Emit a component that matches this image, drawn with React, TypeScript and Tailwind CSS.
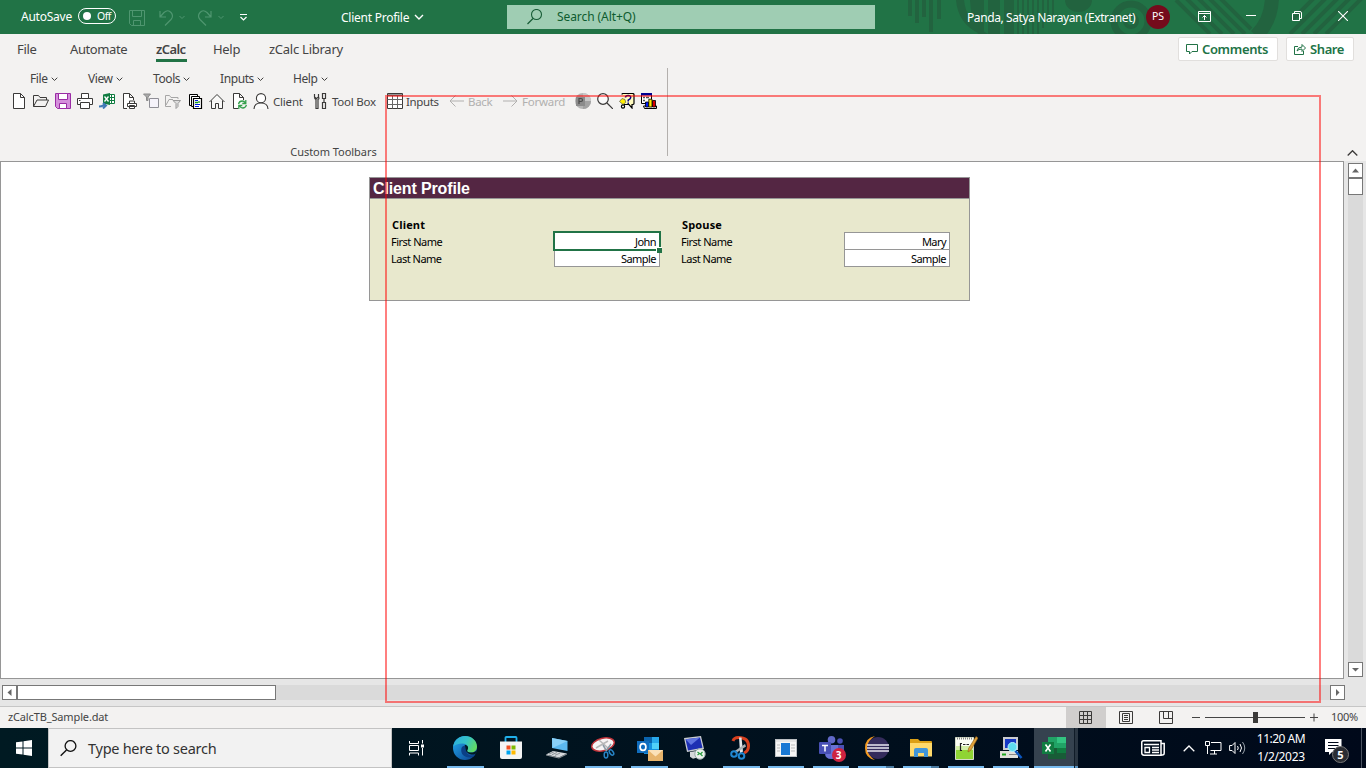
import React from "react";

const K = "#3b3a39";

function Svg({ w = 16, h = 16, className = "", children }: { w?: number; h?: number; className?: string; children: React.ReactNode }) {
  return (
    <svg width={w} height={h} viewBox={`0 0 ${w} ${h}`} className={`block shrink-0 ${className}`} fill="none">
      {children}
    </svg>
  );
}

function Chevron({ w = 7, color = K }: { w?: number; color?: string }) {
  return (
    <svg width={w} height={w * 0.6} viewBox="0 0 10 6" className="block shrink-0" fill="none">
      <path d="M1 1l4 4 4-4" stroke={color} strokeWidth="1.4" />
    </svg>
  );
}

function TitlePattern() {
  const thin = [1017, 1022, 1027, 1032, 1037, 1042, 1047, 1052];
  return (
    <svg width="466" height="34" viewBox="900 0 466 34" className="absolute right-0 top-0" fill="none">
      <g fill="#22633f">
        <path d="M908 0h4v16h-4zM915 0h4v23h-4zM922 0h4v17h-4zM929 0h4v32h-4zM937 0h4v19h-4z" />
        <path d="M956 0h8q2 22 24 34h-8Q958 24 956 0zM970 0h14v34h-6Q971 20 970 0zM988 0h12v34h-12zM1004 0h10v34h-10z" />
        {thin.map((x, i) => (
          <rect key={x} x={x} y="0" width="2" height={34 - (i > 4 ? (i - 4) * 6 : 0)} />
        ))}
        <path d="M1065 0h27a13.5 12 0 0 1-27 0z" />
      </g>
      <g stroke="#22633f">
        <circle cx="1131" cy="21" r="17" strokeWidth="7" />
        <circle cx="1131" cy="21" r="6" strokeWidth="4" />
        <path d="M1176 0l34 34M1186 -2l36 36M1197 -3l37 37M1208 -3l37 37M1219 -3l32 32" strokeWidth="4" />
        <path d="M1272 -4q0 24-16 40" strokeWidth="14" />
        <path d="M1292 20l22-22M1290 34l36-36M1302 34l36-36M1314 34l36-36M1326 34l36-36" strokeWidth="4" />
      </g>
    </svg>
  );
}

function TitleBar() {
  return (
    <header className="relative flex h-[34px] shrink-0 items-center bg-[#217346] text-white">
      <TitlePattern />
      <div className="relative flex h-full w-full items-center text-[12px]">
        <span className="ml-[21px] w-[57px] whitespace-nowrap tracking-[-0.23px]">AutoSave</span>
        <span className="flex h-[16px] w-[38px] items-center rounded-full border border-white pl-[4px] -mt-[2px]">
          <span className="h-[8px] w-[8px] rounded-full bg-white" />
          <span className="ml-[6px] text-[10.5px] leading-none tracking-[-0.5px]">Off</span>
        </span>
        <Svg w={16} h={16} className="ml-[13px] mt-[2px]">
          <path d="M.5.5h15v15h-13l-2-2zM3.5.5v6h9v-6M4.500 15.500v-5h7v5" stroke="#4f9670" />
        </Svg>
        <Svg w={28} h={18} className="ml-[13px] mt-[1px]">
          <path d="M2 2v6h6M2 8l4-4.500q4-3.500 7 0t0 7l-6 6" stroke="#4f9670" strokeWidth="1.2" />
          <path d="M21.500 7l2.500 2.500 2.500-2.500" stroke="#4f9670" />
        </Svg>
        <Svg w={28} h={18} className="ml-[11px] mt-[1px]">
          <path d="M14 2v6H8M14 8l-4-4.500q-4-3.500-7 0t0 7l6 6" stroke="#4f9670" strokeWidth="1.2" />
          <path d="M21.500 7l2.500 2.500 2.500-2.500" stroke="#4f9670" />
        </Svg>
        <Svg w={9} h={7} className="ml-[14px]">
          <path d="M1 .5h7M1.500 3l3 3 3-3" stroke="#fff" strokeWidth="1.2" />
        </Svg>
        <span className="ml-[93px] w-[73px] whitespace-nowrap pt-[1px] tracking-[-0.25px]">Client Profile</span>
        <Chevron w={10} color="#fff" />
        <div className="-mt-[1px] ml-[83px] flex h-[24px] w-[368px] items-center bg-[#9fcdb3] text-[#0e5c2f]">
          <Svg w={16} h={16} className="ml-[20px]">
            <circle cx="9.500" cy="5.500" r="5" stroke="#185c37" strokeWidth="1.100" />
            <path d="M6 9.500L.5 15" stroke="#185c37" strokeWidth="1.200" />
          </Svg>
          <span className="ml-[14px] whitespace-nowrap tracking-[-0.08px]">Search (Alt+Q)</span>
        </div>
        <span className="ml-[92px] w-[170px] whitespace-nowrap pt-[1px] tracking-[-0.4px]">Panda, Satya Narayan (Extranet)</span>
        <span className="ml-[9px] flex h-[24px] w-[24px] items-center justify-center rounded-full bg-[#750b1c] text-[10.5px]">PS</span>
        <Svg w={13} h={11} className="-mt-[2px] ml-[28px]">
          <path d="M.5.5h12v10H.5zM.5 2.500h12M6.500 9V4.500M4.500 6.500l2-2 2 2" stroke="#fff" />
        </Svg>
        <span className="-mt-[3px] ml-[35px] h-px w-[10px] bg-white" />
        <Svg w={10} h={10} className="-mt-[2px] ml-[36px]">
          <path d="M.5 2.500h7v7h-7zM2.500 2V.5H8Q9.500.5 9.500 2v5.500H8" stroke="#fff" />
        </Svg>
        <Svg w={10} h={10} className="-mt-[2px] ml-[36px]">
          <path d="M0 0l10 10M10 0L0 10" stroke="#fff" strokeWidth="1.100" />
        </Svg>
      </div>
    </header>
  );
}

function TabRow() {
  return (
    <nav className="flex h-[30px] items-center text-[13px] text-[#444]">
      <span className="ml-[17px] w-[53px] whitespace-nowrap pt-[2px] tracking-[-0.35px]">File</span>
      <span className="w-[86px] whitespace-nowrap pt-[2px] tracking-[-0.4px]">Automate</span>
      <span className="flex h-full w-[31px] flex-col justify-end">
        <span className="whitespace-nowrap text-[13px] font-semibold leading-[18px] tracking-[-0.6px]">zCalc</span>
        <span className="mb-[2px] mt-[1px] h-[3px] bg-[#217346]" />
      </span>
      <span className="ml-[26px] w-[56px] whitespace-nowrap pt-[2px] tracking-[-0.3px]">Help</span>
      <span className="whitespace-nowrap pt-[2px] tracking-[-0.25px]">zCalc Library</span>
      <div className="ml-auto mr-[12px] flex gap-[8px] text-[13px] font-semibold text-[#217346]">
        <span className="flex h-[24px] w-[100px] items-center rounded-[2px] border border-[#e1dfdd] bg-white pl-[7px]">
          <Svg w={12} h={11}>
            <path d="M.5.5h11v7H6L3.500 10V7.500h-3z" stroke="#217346" />
          </Svg>
          <span className="ml-[4px] whitespace-nowrap pt-[1px] tracking-[-0.35px]">Comments</span>
        </span>
        <span className="flex h-[24px] w-[68px] items-center rounded-[2px] border border-[#e1dfdd] bg-white pl-[7px]">
          <Svg w={12} h={12}>
            <path d="M4 3.500H.5v8h9V8M3 8q.5-4 5-4V1.500L11.500 5 8 8.500V6Q4.500 6 3 8z" stroke="#217346" />
          </Svg>
          <span className="ml-[4px] whitespace-nowrap pt-[1px] tracking-[-0.4px]">Share</span>
        </span>
      </div>
    </nav>
  );
}

function MenuItem({ label, className }: { label: string; className: string }) {
  return (
    <span className={`flex items-center gap-[3px] whitespace-nowrap ${className}`}>
      {label}
      <Chevron />
    </span>
  );
}

function Toolbar() {
  return (
    <div className="flex h-[18px] items-center gap-[6px] pl-[11px]">
      <Svg>
        <path d="M2.500.5h7l4 4v11h-11z" fill="#fff" stroke={K} />
        <path d="M9.500.5v4h4" stroke={K} />
      </Svg>
      <Svg>
        <path d="M.5 13.500v-11h5l1.500 2h6.500V7M.5 13.500l3.500-6.500h11.500l-3 6.500z" stroke={K} />
      </Svg>
      <Svg>
        <path d="M.5.5h15v15h-13l-2-2z" fill="#d48fdb" stroke="#9a2ca5" />
        <path d="M3.500.5h9v6h-9zM4.500 10.500h7v5h-7z" fill="#fff" stroke="#9a2ca5" />
      </Svg>
      <Svg>
        <path d="M.5 5.500h15v6H.5z" fill="#fff" stroke={K} />
        <path d="M4.500.5h7v5h-7zM3.500 9.500h9v6h-9z" fill="#fff" stroke={K} />
        <path d="M2 7.500h1.500" stroke={K} />
      </Svg>
      <Svg>
        <path d="M10 1.500h5.500v9H10zM11 4.500h4M11 7.500h4M12.500 1.500v9" stroke="#107c41" fill="#fff" />
        <path d="M4 1.500L11 0v12l-7-1.500z" fill="#107c41" />
        <path d="M5.500 3.500l4 5M9.500 3.500l-4 5" stroke="#fff" strokeWidth="1.300" />
        <path d="M0 13.500q3 0 4-1h2M4 10l3 2.500L4 15.500" stroke="#3f78b5" strokeWidth="2" />
      </Svg>
      <Svg>
        <path d="M6 15.500H2.500V.5h6l4 4V7M8.500.5v4h4" fill="#fff" stroke={K} />
        <path d="M6.500 10.500h9v3h-9zM8.500 8h5v2.500h-5zM8.500 12.500h5v3h-5z" fill="#fff" stroke={K} />
      </Svg>
      <Svg>
        <path d="M.5 1h7L5 4v3.500H3.500V4z" fill="#aaa" stroke="#8a8a8a" />
        <path d="M6.500 5.500h9v9h-9z" fill="#f5f3fa" stroke="#8f8f96" />
      </Svg>
      <Svg>
        <path d="M6 13.500H.5v-11h4l1.500 2h7V6M1 12l3-5.500h4" stroke="#a6a6a6" />
        <path d="M8 7.500h7.500l-2.500 3v3l-2 2v-5z" fill="#ddd" stroke="#999" />
      </Svg>
      <Svg>
        <path d="M2.500 1.500h8v11h-8z" fill="#fff" stroke="#000" />
        <path d="M4.500 3.500h8v10h-8z" fill="#fff" stroke="#000" />
        <path d="M6.500 5.500h8v10h-8z" fill="#fff" stroke="#000" strokeWidth="1.200" />
        <path d="M8 7.500h3M8 11.500h5M8 13.500h4" stroke="#001be0" strokeWidth="1.200" />
        <path d="M8 9.500h3M12 8v2" stroke="#13971e" strokeWidth="1.300" />
      </Svg>
      <Svg>
        <path d="M.5 9L8 1.500 15.500 9M2.500 7.500v8h4v-5h3v5h4v-8" stroke={K} fill="#fff" fillOpacity=".5" />
      </Svg>
      <Svg>
        <path d="M7 15.500H2.500V.5h6l4 4V7M8.500.5v4h4" fill="#fff" stroke={K} />
        <path d="M7.500 11q.8-3 3.700-3 2 0 3.300 2M14.800 7v3.500h-3.500M15.500 12q-1 3-3.700 3-2 0-3.300-2M7.800 16v-3.500h3.500" stroke="#34a04c" strokeWidth="1.300" />
      </Svg>
      <Svg>
        <circle cx="8" cy="5.200" r="4.600" fill="#fff" stroke={K} strokeWidth="1.100" />
        <path d="M1 16q.3-6 7-6t7 6" fill="#fff" fillOpacity=".6" stroke={K} strokeWidth="1.100" />
      </Svg>
      <span className="-ml-[2px] w-[34px] whitespace-nowrap pt-[1px] tracking-[-0.2px]">Client</span>
      <Svg>
        <path d="M1.500 1v3l2 1.500 2-1.500V1M1.500 4q0 2 1.500 2.500v9h2v-9Q6.500 6 5.500 4M9.500.5h3v5h-3zM11 5.500v4M9.500 9.500h3v6h-3z" stroke={K} strokeWidth="1.200" />
      </Svg>
      <span className="-ml-[3px] w-[46px] whitespace-nowrap pt-[1px] tracking-[-0.25px]">Tool Box</span>
      <Svg className="ml-[3px]">
        <path d="M.5.5h15v15H.5z" fill="#fff" stroke={K} />
        <path d="M.5 2.500h15M.5 6.500h15M.5 11.500h15M5.500 2.500v13M10.500 2.500v13" stroke="#666" />
        <path d="M1 1.500h14" stroke="#999" />
      </Svg>
      <span className="-ml-[3px] w-[34px] whitespace-nowrap pt-[1px] tracking-[-0.35px]">Inputs</span>
      <Svg className="ml-[3px]">
        <path d="M15 8H1M6.500 2.500L1 8l5.500 5.500" stroke="#b1b0af" />
      </Svg>
      <span className="-ml-[3px] w-[25px] whitespace-nowrap pt-[1px] tracking-[-0.3px] text-[#b1b0af]">Back</span>
      <Svg className="ml-[3px]">
        <path d="M1 8h14M9.500 2.500L15 8l-5.500 5.500" stroke="#b1b0af" />
      </Svg>
      <span className="-ml-[2px] w-[44px] whitespace-nowrap pt-[1px] tracking-[-0.25px] text-[#b1b0af]">Forward</span>
      <Svg className="ml-[3px]">
        <circle cx="8" cy="8" r="8" fill="#b5b5b5" />
        <path d="M8 8h8a8 8 0 0 1-8 8z" fill="#a2a2a2" />
        <path d="M8 0a8 8 0 0 1 8 8H8z" fill="#c8c8c8" />
        <rect x="1" y="4" width="9" height="9" fill="#8b8b8b" />
        <path d="M4 11V5.500h2q1.500 0 1.500 1.500T6 8.500H4" stroke="#4a4a4a" strokeWidth="1.200" />
      </Svg>
      <Svg>
        <circle cx="6" cy="6" r="5.300" fill="#fafafa" stroke={K} strokeWidth="1.200" />
        <path d="M10 10l6 6" stroke={K} strokeWidth="1.200" />
      </Svg>
      <Svg>
        <path d="M3 1.500Q3 .5 4 .5h9.500q1.500 0 1.500 1v9q0 1-1.500 1H13V15l-3-3.500H5" fill="#fffbc0" stroke="#000" strokeWidth="1.200" />
        <path d="M6.500 4.500q0-2 2.700-2t2.500 2q0 1.300-2.500 2.700v1.300M9.200 9.500V11" stroke="#00008b" strokeWidth="1.500" />
        <path d="M.5 8.500L3 5.500l3 1 .7 3L4 11.500z" fill="#ffee00" stroke="#555" strokeWidth=".7" />
        <circle cx="4" cy="13.500" r="1.600" fill="#fff" stroke="#000" strokeWidth="1.200" />
      </Svg>
      <Svg>
        <path d="M.5.5h10v10H.5z" fill="#fff" stroke="#000" />
        <path d="M0 0h11v2.500H0z" fill="#000090" />
        <path d="M2 4.500h2M5 4.500h3M2 7.500h2" stroke="#555" strokeWidth="1.500" />
        <path d="M3.500 15.500l-1-2.500h13v2.500z" fill="#fff" stroke="#000" />
        <path d="M4.500 9h3v5h-3z" fill="#001cff" stroke="#000" strokeWidth=".8" />
        <path d="M7.800 6.200h3.200V14H7.800z" fill="#ffef00" stroke="#000" strokeWidth=".8" />
        <path d="M11.500 7.500h3V14h-3z" fill="#d50000" stroke="#000" strokeWidth=".8" />
      </Svg>
    </div>
  );
}

function Ribbon() {
  return (
    <div className="flex h-[97px] shrink-0">
      <div className="mt-[4px] flex h-[88px] w-[668px] flex-col border-r border-[#b3b0ad] text-[11.5px] text-[#444]">
        <div className="flex h-[20px] items-center pt-[2px] text-[12px] tracking-[-0.4px]">
          <MenuItem className="ml-[30px] w-[58px]" label="File" />
          <MenuItem className="w-[65px]" label="View" />
          <MenuItem className="w-[67px]" label="Tools" />
          <MenuItem className="w-[73px]" label="Inputs" />
          <MenuItem className="" label="Help" />
        </div>
        <div className="mt-[4px]">
          <Toolbar />
        </div>
        <div className="mt-auto flex h-[9px] items-center justify-center">
          <span className="whitespace-nowrap text-[11px] leading-none tracking-[-0.04px]">Custom Toolbars</span>
        </div>
      </div>
      <Svg w={11} h={6} className="ml-auto mr-[8px] mt-[86px]">
        <path d="M.7 5.500l4.800-4.800 4.800 4.800" stroke={K} strokeWidth="1.300" />
      </Svg>
    </div>
  );
}

function Column({ title, rows, active }: { title: string; rows: [string, string][]; active?: boolean }) {
  return (
    <div className={`flex flex-col text-[11px] text-black ${active ? "w-[290px]" : "w-[289px]"}`}>
      <div className="h-[15px] pl-[1px] font-['Open_Sans'] text-[11px] font-bold leading-[16px] tracking-[0.15px]">{title}</div>
      <div className="flex">
        <div className="w-[163px] tracking-[-0.5px]">
          {rows.map(([label]) => (
            <div key={label} className="h-[17px] whitespace-nowrap leading-[19px]">{label}</div>
          ))}
        </div>
        <div className="relative h-[35px] w-[106px] border border-[#969696] bg-white text-right tracking-[-0.55px]">
          <div className="h-[17px] border-b border-[#969696] pr-[3px] leading-[18px]">{rows[0][1]}</div>
          <div className="h-[16px] pr-[3px] leading-[18px]">{rows[1][1]}</div>
          {active && (
            <div className="absolute -left-[2px] -top-[2px] h-[20px] w-[108px] border-2 border-[#217346]">
              <span className="absolute -bottom-[4px] -right-[3px] h-[6px] w-[6px] border-l border-t border-white bg-[#217346]" />
            </div>
          )}
        </div>
      </div>
    </div>
  );
}

function Arrow({ d }: { d: string }) {
  return (
    <span className="flex h-[15px] w-[15px] shrink-0 items-center justify-center border border-[#777] bg-white">
      <Svg w={9} h={9}>
        <path d={d} fill="#666" />
      </Svg>
    </span>
  );
}

function Sheet() {
  return (
    <main className="flex h-[518px] shrink-0 bg-[#e6e6e6]">
      <div className="w-[1344px] border border-[#969696] bg-white">
        <div className="ml-[368px] mt-[15px] h-[124px] w-[601px] border border-[#969696] bg-[#e8e8cd]">
          <div className="h-[21px] border-b border-[#969696] bg-[#542643] pl-[3px] font-['Liberation_Sans'] text-[16px] font-bold leading-[21px] tracking-[-0.13px] text-white">Client Profile</div>
          <div className="flex gap-px pl-[21px] pt-[18px]">
            <Column active title="Client" rows={[["First Name", "John"], ["Last Name", "Sample"]]} />
            <Column title="Spouse" rows={[["First Name", "Mary"], ["Last Name", "Sample"]]} />
          </div>
        </div>
      </div>
      <div className="ml-[4px] mt-[2px] flex h-[514px] w-[15px] flex-col bg-[#dadada]">
        <Arrow d="M1 6.500h7L4.500 2.500z" />
        <span className="h-[17px] border border-[#777] bg-white" />
        <span className="flex-1" />
        <Arrow d="M1 3h7L4.500 6.500z" />
      </div>
    </main>
  );
}

function StatusBar() {
  return (
    <div className="flex h-[22px] shrink-0 items-center border-t border-[#c6c6c6] bg-[#f3f2f1] text-[11px] text-[#444]">
      <span className="ml-[8px] whitespace-nowrap tracking-[-0.14px]">zCalcTB_Sample.dat</span>
      <span className="ml-auto flex h-full w-[40px] items-center justify-center bg-[#d0cecd] pr-[1px]">
        <Svg w={13} h={13}>
          <path d="M.5.5h12v12H.5zM.5 4.500h12M.5 8.500h12M4.500.5v12M8.500.5v12" stroke={K} />
        </Svg>
      </span>
      <span className="flex w-[40px] justify-center">
        <Svg w={14} h={13}>
          <path d="M.5.5h13v12H.5zM3.500 2.500h7v8h-7zM5 4.500h4M5 6.500h4M5 8.500h4" stroke={K} />
        </Svg>
      </span>
      <span className="flex w-[40px] justify-center">
        <Svg w={14} h={13}>
          <path d="M.5.5h13v12H.5zM4.500.5v7M9.500.5v7M4.500 7.500h9" stroke={K} />
        </Svg>
      </span>
      <span className="ml-[6px] h-px w-[8px] bg-[#444]" />
      <span className="ml-[5px] flex w-[100px] items-center">
        <span className="h-px w-[48px] bg-[#444]" />
        <span className="h-[11px] w-[5px] bg-[#3b3a39]" />
        <span className="h-px w-[47px] bg-[#444]" />
      </span>
      <Svg w={8} h={9} className="ml-[5px]">
        <path d="M0 4.500h8M4 .5v8" stroke="#444" />
      </Svg>
      <span className="ml-[13px] w-[35px] whitespace-nowrap tracking-[-0.3px]">100%</span>
    </div>
  );
}

function App46({ line, children }: { line?: boolean; children: React.ReactNode }) {
  return (
    <span className="flex h-full w-[46px] flex-col items-center">
      <span className="flex flex-1 items-center pt-[2px]">{children}</span>
      <span className={line ? "h-[2px] w-[37px] bg-[#76b9ed]" : "h-[2px]"} />
    </span>
  );
}

function App45({ stacked, children }: { stacked?: boolean; children: React.ReactNode }) {
  return (
    <span className="flex h-full w-[45px] flex-col items-center pr-[1px]">
      <span className="flex flex-1 items-center pt-[2px]">{children}</span>
      <span className="flex h-[2px] w-[36px] bg-[#76b9ed]">
        {stacked && <span className="ml-auto h-full w-[8px] bg-[#4a7aa0]" />}
      </span>
    </span>
  );
}

function Taskbar() {
  return (
    <footer className="flex h-[40px] shrink-0 items-center bg-linear-to-r from-[#001a22] to-[#00091a] text-white">
      <span className="flex w-[48px] justify-center">
        <Svg>
          <path d="M0 2.300L6.500 1.400v6.100H0zM7.500 1.200L16 0v7.500H7.500zM0 8.500h6.500v6.100L0 13.700zM7.500 8.500H16V16l-8.500-1.200z" fill="#fff" />
        </Svg>
      </span>
      <div className="flex h-full w-[344px] items-center border border-[#c3c3c3] bg-[#f2f2f2] pl-[11px]">
        <Svg w={17} h={17}>
          <circle cx="10.500" cy="6" r="5.400" stroke="#111" strokeWidth="1.300" />
          <path d="M6.500 10L.7 15.800" stroke="#111" strokeWidth="1.400" />
        </Svg>
        <span className="ml-[11px] whitespace-nowrap pt-[1px] text-[14.5px] tracking-[-0.27px] text-[#333]">Type here to search</span>
      </div>
      <span className="flex w-[50px] justify-center pr-[2px]">
        <Svg w={17} h={16}>
          <path d="M1.500 1v2.500h9V1M1.500 15.500V13h9v2.500M1.500 5.500h9v5h-9zM14.500 0v3.500M14.500 8v7.500" stroke="#fff" />
          <path d="M13 4.500h3v3h-3z" fill="#fff" />
        </Svg>
      </span>
      <App46 line>
        <Svg w={24} h={24}>
          <defs>
            <linearGradient id="edgeTop" x1="0" y1="0" x2="24" y2="14" gradientUnits="userSpaceOnUse">
              <stop stopColor="#2aa9e0" />
              <stop offset=".5" stopColor="#35c3c8" />
              <stop offset="1" stopColor="#6be04e" />
            </linearGradient>
            <linearGradient id="edgeBody" x1="0" y1="8" x2="16" y2="24" gradientUnits="userSpaceOnUse">
              <stop stopColor="#1f9be0" />
              <stop offset="1" stopColor="#0f4f9c" />
            </linearGradient>
          </defs>
          <circle cx="12" cy="12" r="12" fill="url(#edgeBody)" />
          <path d="M.2 10.500C1.500 3.500 6.500 0 12 0c7 0 12 5 12 10.500 0 4-3 6-6 6-3.500 0-4.500-1.500-3.500-2.800C16 11 14 7.500 9.500 7.500 5 7.500 1.500 9 .2 10.500z" fill="url(#edgeTop)" />
          <path d="M8.500 12c-1.500 6 3 9.500 8 9.500 2.500 0 4.500-1 5.500-2.500-4 1.500-8.500 0-8.500-4.500-1.500-2 .5-3 1-3.500-1.500-2-5-1.500-6 1z" fill="#0b3f86" />
          <path d="M14.500 13.700C16 11.500 14.500 8.700 11.500 9c1 1 1 3.500 1.500 5.500.5 2.500 4 4 6.500 4 1.500 0 3-.5 3.500-1l1-3.500c-1.500 2-3.500 2.500-6 2.500-3 0-4.500-1.300-3.500-2.800z" fill="#001a22" />
        </Svg>
      </App46>
      <App46>
        <Svg w={24} h={24}>
          <path d="M6.500 6V1.800q0-.8.800-.8h9.400q.8 0 .8.800V6" stroke="#20b0ea" strokeWidth="1.800" />
          <path d="M1 5.500h22V21q0 2-2 2H3q-2 0-2-2z" fill="#f4f4f4" />
          <path d="M7.500 9.500h4v4h-4z" fill="#f25022" />
          <path d="M12.500 9.500h4v4h-4z" fill="#7fba00" />
          <path d="M7.500 14.500h4v4h-4z" fill="#00a4ef" />
          <path d="M12.500 14.500h4v4h-4z" fill="#ffb900" />
        </Svg>
      </App46>
      <App46>
        <Svg w={24} h={24}>
          <path d="M7 2l15.500 3v10L7 12z" fill="#5cb8ef" />
          <path d="M7 2l15.500 3-15 7z" fill="#8ad0f7" />
          <path d="M1 18.500l7-3.500 14 2.500-8 4z" fill="#d5d9dc" />
          <path d="M1 18.500v1l13 3 8-4v-1l-8 4z" fill="#8d9499" />
          <path d="M4 18l5-2.200M7 18.700l5-2.200M10 19.300l5-2.200" stroke="#8d9499" />
        </Svg>
      </App46>
      <App46 line>
        <Svg w={24} h={24}>
          <ellipse cx="12" cy="8.500" rx="11.500" ry="6.200" transform="rotate(-14 12 8.500)" fill="#f7f4f4" stroke="#c0333a" strokeWidth="1.500" />
          <path d="M5 12l12-7M8 4l9 8" stroke="#b8b8b8" strokeWidth="1.500" />
          <path d="M12 9l3 5M20 8l-5 7" stroke="#8a9aa5" strokeWidth="1.500" />
          <ellipse cx="15" cy="19" rx="1.800" ry="3" stroke="#2784c6" strokeWidth="1.500" />
          <ellipse cx="20.500" cy="16.500" rx="1.700" ry="3" transform="rotate(-35 20.500 16.500)" stroke="#2784c6" strokeWidth="1.500" />
        </Svg>
      </App46>
      <App46 line>
        <Svg w={27} h={26}>
          <path d="M8 2h15v17H8z" fill="#1490df" />
          <path d="M8 2h8v6H8z" fill="#0a64ad" />
          <path d="M16 2h7v6h-7z" fill="#28a8ea" />
          <path d="M16 8h7v6h-7z" fill="#50d0f8" />
          <rect x="1" y="6" width="12" height="12" fill="#0f6cbd" />
          <ellipse cx="7" cy="12" rx="2.900" ry="3.400" stroke="#fff" strokeWidth="1.700" />
          <path d="M12 15h15v11H12z" fill="#e7b46c" />
          <path d="M12 15h15l-7.500 6.500z" fill="#fbe1b8" />
        </Svg>
      </App46>
      <App46>
        <Svg w={24} h={24}>
          <path d="M1 2l17-2 3 13-17 3z" fill="#c9cdd1" />
          <path d="M2.500 3.200L17 1.500l2.500 10.300-14.500 2.600z" fill="#1d2fb3" />
          <path d="M2.500 3.200L17 1.500 8 9z" fill="#5f74e0" />
          <path d="M7 16l8-1.300 1 4 3 1.500-9 2.500-3-2z" fill="#d6d8da" />
          <circle cx="17" cy="18" r="5.200" fill="#eef2ee" stroke="#9aa" />
          <path d="M14.500 19l2-1.500-2-1.500M19.500 16l-2 2 2 2" stroke="#259a3b" strokeWidth="1.200" />
        </Svg>
      </App46>
      <App46 line>
        <Svg w={24} h={24}>
          <path d="M4 5Q5 1.500 9.500 1.500q10 0 10 8.500 0 5-4.500 7" stroke="#d8401f" strokeWidth="3" />
          <path d="M10 1.500h2.500l1.500 14-3 2z" fill="#e4e8ea" />
          <path d="M16 8l1 2.500L7 17l-2-1.500z" fill="#a9b0b5" />
          <circle cx="5" cy="18" r="2.800" stroke="#2088d2" strokeWidth="2" />
          <circle cx="12.500" cy="20" r="2.800" stroke="#2088d2" strokeWidth="2" />
        </Svg>
      </App46>
      <App45>
        <Svg w={22} h={18}>
          <path d="M0 0h22v18H0z" fill="#bcc0c4" />
          <path d="M1 1h20v2H1z" fill="#e6e6e6" />
          <path d="M1 3h20v14H1z" fill="#f6f6f6" />
          <path d="M6 4h9v12H6z" fill="#1978d4" />
          <path d="M2 6h3M2 9h3M2 12h3M16 6h4M16 9h4M16 12h4" stroke="#bbb" />
        </Svg>
      </App45>
      <App45>
        <Svg w={27} h={25}>
          <circle cx="13.500" cy="3.800" r="3.800" fill="#6169c8" />
          <circle cx="22" cy="5" r="2.800" fill="#4a51b5" />
          <path d="M18 9h8v7q0 4-4 5h-4z" fill="#4a51b5" />
          <path d="M7 9h13v8q0 6-6.500 6T7 17z" fill="#6972d6" />
          <rect x="1" y="6" width="12" height="12" rx="1" fill="#4850b5" />
          <path d="M4 9.500h6M7 9.500V15.500" stroke="#fff" strokeWidth="1.500" />
        </Svg>
        <span className="relative">
          <span className="absolute -left-[13px] top-0 flex h-[14px] w-[14px] items-center justify-center rounded-full bg-[#cf2340] text-[10px] font-bold leading-none">3</span>
        </span>
      </App45>
      <App45 stacked>
        <Svg w={25} h={24}>
          <path d="M11 0Q1 2 1 12t10 12Q4 20 4 12T11 0z" fill="#f39a21" />
          <circle cx="14" cy="12" r="11" fill="#342c5c" />
          <path d="M3 9h22M3 12h22M3 15h22" stroke="#e8e6f0" strokeWidth="1.600" />
        </Svg>
      </App45>
      <App45 stacked>
        <Svg w={22} h={20}>
          <path d="M0 1h8l2 2h11q1 0 1 1v14H0z" fill="#dca016" />
          <path d="M0 5h22v13.500H0z" fill="#ffd96b" />
          <path d="M4 19v-7q0-2 2-2h10q2 0 2 2v7h-4v-4H8v4z" fill="#4195d9" />
        </Svg>
      </App45>
      <App45>
        <Svg w={24} h={24}>
          <path d="M1.500 1.500h18v22h-18z" fill="#fbfdf4" stroke="#d5dcc8" />
          <path d="M2 10h17v13H2z" fill="#d3efa6" />
          <path d="M2 14h17v9H2z" fill="#8fd434" />
          <path d="M3 2.500h15" stroke="#888" strokeWidth="2" strokeDasharray="1 1" />
          <path d="M8 7.500H6.500v7H8M9 8.500h2.500M12.500 8.500h2.500" stroke="#222" strokeWidth="1.200" />
          <path d="M22 .5l2 1.500-7 12-3 2 .5-3.500z" fill="#e0a13a" stroke="#8b5b14" strokeWidth=".6" />
        </Svg>
      </App45>
      <App45>
        <Svg w={24} h={22}>
          <path d="M4 0h15v13H4z" fill="#c9cbd0" />
          <path d="M6 2h11v9H6z" fill="#1538c4" />
          <path d="M1 14h18v7H1z" fill="#e0e0da" />
          <path d="M3 17.500h4" stroke="#1fa820" strokeWidth="2" />
          <path d="M10 17.500h8" stroke="#888" />
          <path d="M16 13.500l6.500 7.500" stroke="#0b57c0" strokeWidth="2.500" />
          <circle cx="13.500" cy="10" r="4.500" fill="#5fdcf0" stroke="#b4f3ff" strokeWidth="1" />
        </Svg>
      </App45>
      <span className="flex h-full w-[40px] flex-col items-center bg-[#35424f]">
        <span className="flex flex-1 items-center pt-[2px]">
          <Svg w={24} h={22}>
            <path d="M6 0h9v11H6z" fill="#21a366" />
            <path d="M15 0h9v6h-9z" fill="#33c481" />
            <path d="M15 6h9v5h-9z" fill="#21a366" />
            <path d="M15 11h9v5h-9z" fill="#107c41" />
            <path d="M6 11h9v11H6zM15 16h9v6h-9z" fill="#185c37" />
            <path d="M0 5h12v12H0z" fill="#107c41" />
            <path d="M3.500 7.500l5 7M8.500 7.500l-5 7" stroke="#fff" strokeWidth="1.600" />
          </Svg>
        </span>
        <span className="h-[2px] w-full bg-[#76b9ed]" />
      </span>
      <span className="flex h-full w-[4px] flex-col justify-end border-l border-[#101c28] bg-[#2a3642]">
        <span className="h-[2px] bg-[#5a93c0]" />
      </span>
      <Svg w={24} h={16} className="ml-[63px]">
        <path d="M.75 2.500q0-1.750 1.750-1.750h17.500v14.500H3Q.75 15 .75 13zM20 3.500h3.200v9.500q0 2-1.700 2H20" stroke="#fff" strokeWidth="1.500" />
        <path d="M3 4.500h15M11 7.500h7M11 10h7M11 12.500h7M4 7.500h4.500v5H4z" stroke="#fff" strokeWidth="1.300" />
      </Svg>
      <Svg w={12} h={7} className="ml-[18px]">
        <path d="M.7 6.300L6 1l5.300 5.300" stroke="#fff" strokeWidth="1.300" />
      </Svg>
      <Svg w={17} h={14} className="ml-[10px]">
        <path d="M6 1.500h10v8H5.500M5 13h7M9.500 9.500V13M.5.500h4v4h-4zM2.500 4.500V13" stroke="#fff" />
      </Svg>
      <Svg w={18} h={14} className="ml-[7px]">
        <path d="M.6 4.500h2.500L6 1.500v11l-2.900-3H.6z" stroke="#fff" />
        <path d="M8.500 5q1.500 2 0 4M11 3q3 4 0 8" stroke="#fff" />
        <path d="M13.500 1q4.500 6 0 12" stroke="#9aa3ab" />
      </Svg>
      <span className="ml-[5px] flex w-[58px] flex-col items-center whitespace-nowrap text-[12px] leading-[18px]">
        <span className="tracking-[-0.5px]">11:20 AM</span>
        <span className="tracking-[-0.35px]">1/2/2023</span>
      </span>
      <span className="relative ml-[15px]">
        <Svg w={17} h={16} className="-mt-[2px]">
          <path d="M0 0h16.500v13H7l-3 3v-3H0z" fill="#fff" />
          <path d="M3 3.500h10.500M3 6.500h10.500M3 9.500h7" stroke="#00091a" strokeWidth="1.200" />
        </Svg>
        <span className="absolute left-[7px] top-[5px] flex h-[17px] w-[17px] items-center justify-center rounded-full border border-[#777] bg-[#2a2d33] text-[11px] font-bold leading-none">5</span>
      </span>
      <span className="ml-auto mr-[4px] h-full w-px bg-[#4a5260]" />
    </footer>
  );
}

export default function App() {
  return (
    <div className="relative flex h-[768px] w-[1366px] flex-col overflow-hidden bg-[#f3f2f1] font-['Noto_Sans','Open_Sans',sans-serif]">
      <TitleBar />
      <TabRow />
      <Ribbon />
      <Sheet />
      <div className="flex h-[27px] shrink-0 items-center bg-[#e6e6e6] pl-[2px]">
        <div className="flex h-[15px] w-[1343px] bg-[#dadada]">
          <Arrow d="M6.500 1v7L2.500 4.500z" />
          <span className="w-[259px] border border-[#777] bg-white" />
          <span className="flex-1" />
          <Arrow d="M3 1v7l3.500-3.500z" />
        </div>
      </div>
      <StatusBar />
      <Taskbar />
      <div className="pointer-events-none absolute left-[385px] top-[95px] h-[608px] w-[936px] border-2 border-[#ff0000]/50" />
    </div>
  );
}
